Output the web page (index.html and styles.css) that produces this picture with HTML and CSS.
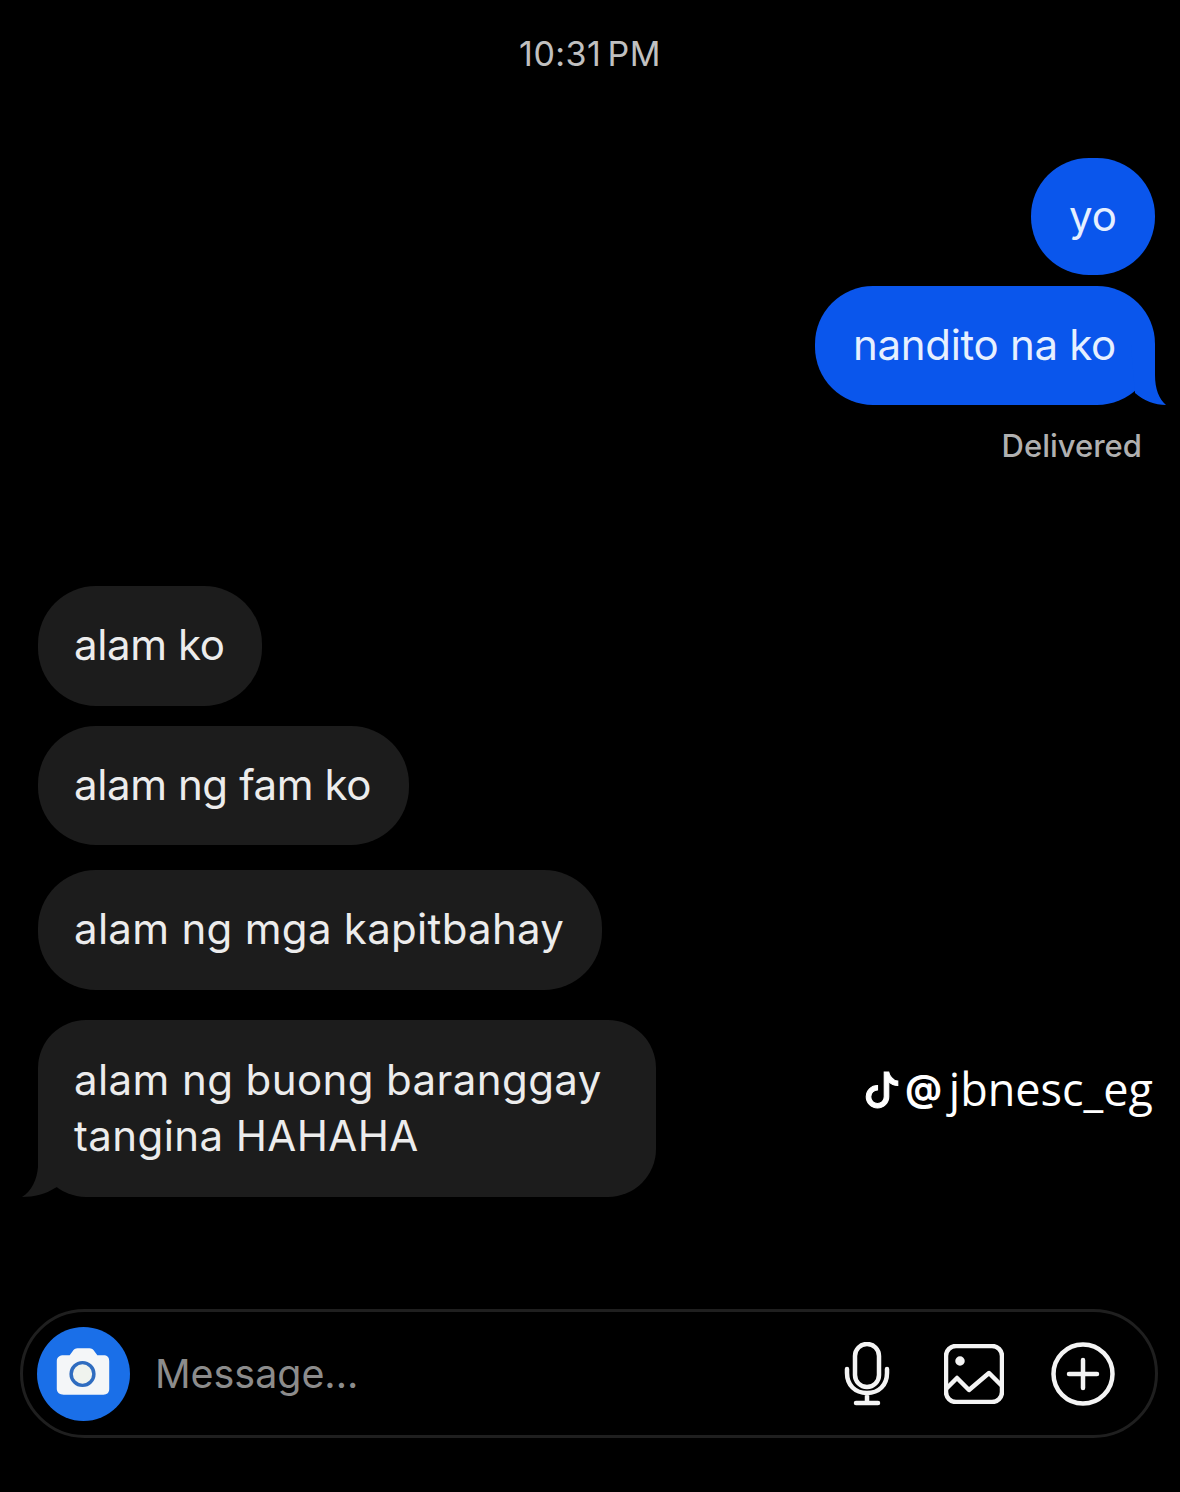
FILE: index.html
```html
<!DOCTYPE html>
<html lang="en">
<head>
    <meta charset="UTF-8">
    <meta name="viewport" content="width=device-width, initial-scale=1.0">
    <title>Messages</title>
    <link rel="stylesheet" href="styles.css">
</head>
<body>
<div class="page">
    <div class="time">10:31 PM</div>

    <div class="sent">
        <div class="bubble blue yo">yo</div>
        <div class="bubble blue nandito">nandito na ko
            <svg class="tail tail_right" viewBox="0 0 35 60"><path d="M0 0H24V30C24 44 28 54 35 60C24 60 13 56 4 48Z"/></svg>
        </div>
    </div>
    <div class="delivered">Delivered</div>

    <div class="received">
        <div class="bubble gray tight">alam ko</div>
        <div class="bubble gray tight gap1 fam">alam ng fam ko</div>
        <div class="bubble gray mga gap2">alam ng mga kapitbahay</div>
        <div class="bubble gray wide gap3 multi">alam ng buong baranggay<br>tangina HAHAHA
            <svg class="tail tail_left" viewBox="0 0 35 60"><path d="M16 0H35V50L33 51C24 57 12 60 0 60C10 54 15 42 16 30Z"/></svg>
        </div>
    </div>

    <div class="input_bar">
        <div class="camera">
            <svg viewBox="0 0 94 94" width="93" height="94">
                <path fill="#f4f6f8" d="M27 28h6l3-4c1-2 3-3 5-3h12c2 0 4 1 5 3l3 4h6c4 0 6 2 6 6v28c0 4-2 6-6 6H27c-4 0-7-2-7-6V34c0-4 3-6 7-6Z"/>
                <circle cx="46" cy="47" r="11.500" fill="#f0f3ee" stroke="#2f6cc0" stroke-width="3.500"/>
            </svg>
        </div>
        <div class="placeholder">Message...</div>
        <div class="tools">
            <svg class="mic" viewBox="0 0 46 64" width="46" height="64">
                <rect x="11" y="2" width="24" height="43" rx="12"/>
                <path d="M3 27v4c0 12 8 20 20 20s20-8 20-20v-4M23 51v10M12 61h22"/>
            </svg>
            <svg class="pic" viewBox="0 0 60 60" width="60" height="60">
                <rect x="2" y="2" width="56" height="56" rx="10"/>
                <circle cx="16" cy="17" r="2.500" class="dot"/>
                <path d="M3 44l10-10 12 12 20-17 12 12"/>
            </svg>
            <svg class="plus" viewBox="0 0 64 64" width="64" height="64">
                <circle cx="32" cy="32" r="29.500"/>
                <path d="M32 18v28M18 32h28"/>
            </svg>
        </div>
    </div>

    <div class="watermark">
        <svg class="tiktok" viewBox="0 0 16 16" width="36" height="38"><path d="M9 0h1.980c.144.715.54 1.617 1.235 2.512C12.895 3.389 13.797 4 15 4v2c-1.753 0-3.070-.814-4-1.829V11a5 5 0 1 1-5-5v2a3 3 0 1 0 3 3z"/></svg>
        <span class="at">@</span>
        <span class="handle">jbnesc_eg</span>
    </div>
</div>
</body>
</html>
```

FILE: styles.css
```css
* { box-sizing: border-box; }
html, body { margin: 0; padding: 0; background: #000; }
body { font-family: "Inter", "Liberation Sans", sans-serif; color: #f2f2f2; }

.page { position: relative; width: 1180px; height: 1492px; overflow: hidden; background: #000; }

.time { padding-top: 34px; line-height: 40px; text-align: center; font-size: 34px; letter-spacing: 0.5px; word-spacing: -4px; color: #c0c0c0; }

.bubble { position: relative; width: fit-content; padding: 31px 38px 33px 36px; font-size: 42px; line-height: 56px; border-radius: 58px; }
.blue { background: #0a56ec; color: #e6f0ff; }
.gray { background: #1c1c1c; color: #ececec; }
.tight { letter-spacing: -0.4px; }
.wide { letter-spacing: 0.4px; }
.mga { letter-spacing: 0.3px; }
.fam { padding-bottom: 32px; }

.sent { display: flex; flex-direction: column; align-items: flex-end; gap: 11px; margin-top: 84px; padding-right: 25px; }
.yo { padding: 30px 38px 31px 38px; }
.nandito { padding: 31px 39px 32px 38px; letter-spacing: -0.3px; }

.delivered { margin-top: 22px; padding-right: 38px; text-align: right; font-size: 31px; line-height: 38px; font-weight: 500; color: #b0b0b0; }

.received { margin-top: 121px; padding-left: 38px; }
.gap1 { margin-top: 20px; }
.gap2 { margin-top: 25px; }
.gap3 { margin-top: 30px; }
.multi { padding: 32px 54px 33px 36px; border-radius: 48px; }

.tail { position: absolute; bottom: 0; width: 35px; height: 60px; }
.tail_right { right: -11px; fill: #0a56ec; }
.tail_left { left: -16px; fill: #1c1c1c; }

.input_bar { display: flex; align-items: center; margin: 112px 22px 0 20px; height: 129px; padding-left: 14px; border: 3px solid #1f1f1f; border-radius: 65px; }
.camera { width: 93px; height: 94px; border-radius: 50%; background: #1a6fe8; flex: none; }
.camera svg { display: block; }
.placeholder { margin-left: 25px; font-size: 39.400px; color: #8c8c8c; }

.tools { display: flex; align-items: center; margin-left: auto; padding-right: 40px; }
.tools svg { display: block; fill: none; stroke: #f4f4f4; stroke-width: 4.500; stroke-linecap: round; stroke-linejoin: round; }
.tools .dot { fill: #f4f4f4; }
.tools .pic { margin: 0 47px 0 54px; }

.watermark { position: absolute; top: 1058px; right: 27px; display: flex; align-items: center; gap: 5px; color: #fff; height: 60px; }
.tiktok { margin-top: 4px; fill: #fff; stroke: #fff; stroke-width: 0.5; }
.at { font-size: 36px; font-weight: 700; }
.handle { font-family: "Open Sans", sans-serif; font-size: 45px; font-weight: 400; margin-left: 2px; }
```
